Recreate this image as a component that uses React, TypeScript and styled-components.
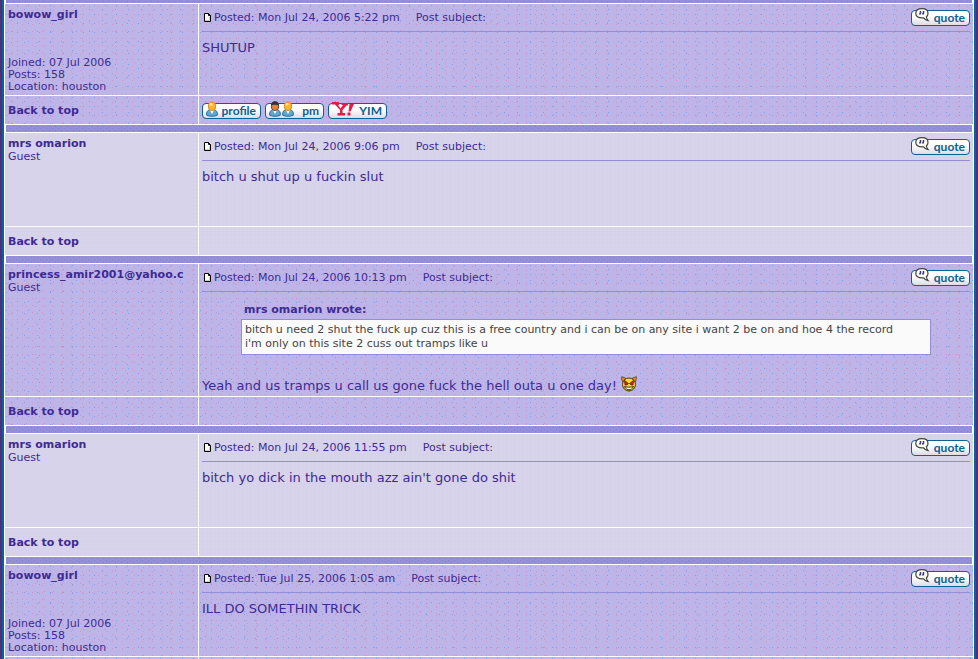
import React from "react";
import styled, { createGlobalStyle } from "styled-components";

const GlobalStyle = createGlobalStyle`
  html { scrollbar-width: none; }
  body {
    margin: 0;
    background: #bdb5e7;
    color: #3f2a94;
    font-family: "DejaVu Sans", Verdana, sans-serif;
    font-size: 11px;
  }
`;

const dot = (color: string, place: string) =>
  `radial-gradient(circle at 0 0, ${color} 0 1px, transparent 1px) ${place}`;

const speckle = [
  dot("#7f9ff0", "1px 1px / 11px 9px"),
  dot("#7f9ff0", "6px 5px / 13px 11px"),
  dot("#cb97cb", "3px 2px / 9px 8px"),
  dot("#cb97cb", "7px 6px / 10px 7px"),
].join(", ");
const paleSpeckle = [
  dot("#cdd3dc", "0 0 / 4px 4px"),
  dot("#dccfe4", "2px 2px / 8px 6px"),
].join(", ");
const barSpeckle = [
  dot("#7f86cc", "1px 1px / 6px 4px"),
  dot("#7f86cc", "4px 3px / 6px 4px"),
].join(", ");

const Page = styled.main`
  display: flex;
  min-height: 100vh;
  overflow: hidden;
  box-sizing: border-box;
  border: solid #552b7c;
  border-width: 0 2px;
`;

const Frame = styled.div`
  flex: 1;
  min-width: 0;
  border: solid #006699;
  border-width: 0 2px;
`;

const Topic = styled.table`
  width: 100%;
  margin-top: -5px;
  table-layout: fixed;
  border-spacing: 1px;
  background: #fff;
`;

const AuthorCol = styled.col`
  width: 193px;
`;

const Cell = styled.td<{ $pale: boolean }>`
  padding: 3px 3px 2px;
  vertical-align: top;
  background: ${(p) => (p.$pale ? `${paleSpeckle}, #d6d3eb` : `${speckle}, #bdb5e7`)};
`;

const PostCell = styled(Cell)<{ $guest: boolean }>`
  height: ${(p) => (p.$guest ? "88px" : "86px")};
`;

const FootCell = styled(Cell)`
  height: 23px;
  vertical-align: middle;
`;

const Spacer = styled.td`
  height: 7px;
  padding: 0;
  border: solid #fff;
  border-width: 0 1px;
  background: ${barSpeckle}, #958fdb;
`;

const Name = styled.strong`
  display: block;
  line-height: 15px;
  white-space: nowrap;
`;

const Detail = styled.div`
  line-height: 12px;
`;

const MemberDetails = styled.div`
  margin-top: 35px;
`;

const TopLink = styled.a`
  color: inherit;
  font-weight: bold;
  text-decoration: none;
`;

const PostHeader = styled.header`
  display: flex;
  align-items: center;
  height: 21px;
  padding-bottom: 3px;
  border-bottom: 1px solid #938ddb;
`;

const Posted = styled.span`
  margin: 0 16px 0 2px;
`;

const Subject = styled.span`
  flex: 1;
`;

const Message = styled.p`
  margin: 8px 0 0;
  font-size: 13px;
  line-height: 16px;
`;

const Quote = styled.blockquote`
  margin: 10px 39px 21px;
`;

const QuoteAuthor = styled.strong`
  display: block;
  padding: 0 3px;
  line-height: 16px;
`;

const QuoteText = styled.p`
  margin: 1px 0 0;
  padding: 3px;
  border: 1px solid #938ddb;
  background: #fafafa;
  color: #444;
  font-size: 11px;
  line-height: 14px;
  white-space: pre-line;
`;

const Buttons = styled.div`
  display: flex;
  gap: 4px;
  padding-top: 1px;
`;

const Badge = styled.a`
  display: flex;
  align-items: center;
  justify-content: space-between;
  box-sizing: border-box;
  width: 59px;
  height: 16px;
  padding: 0 4px 0 3px;
  border: 1px solid #0b6190;
  border-radius: 4px;
  background: linear-gradient(#fff 40%, #dcdce4);
  color: #0b6190;
  font: bold 12px/14px Lato, sans-serif;
  text-decoration: none;
`;

const BadgeIcon = styled.svg`
  flex: none;
  margin-top: -5px;
`;

function PageIcon() {
  return (
    <svg width="10" height="12" viewBox="0 0 10 12" aria-hidden="true">
      <path d="M2.500 1.500h4l2 2v6h-6z" fill="#fff" stroke="#000" />
      <path d="M6.500 1.500v2h2" fill="none" stroke="#000" />
      <path d="M3 8.500h5M7.500 5v4" stroke="#d0d0d0" />
    </svg>
  );
}

function Person({ x = 0, dark = false }: { x?: number; dark?: boolean }) {
  return (
    <g transform={`translate(${x} 0)`}>
      <path d="M.7 14.2c-.5-3 1-5 3.1-5.800h4.400c2.100.8 3.600 2.800 3.100 5.800-2.600 1.400-8 1.400-10.600 0z" fill="#5fa9cf" stroke="#286d99" />
      <path d="M4 9.200 6 13l2-3.800z" fill="#fff" />
      <ellipse cx="6" cy="5.200" rx="3.600" ry="4.200" fill={dark ? "#dc8444" : "#ffb52e"} stroke={dark ? "#704330" : "#d98a20"} />
      {dark ? (
        <path d="M2 4.500c-.3-5.800 8.300-5.800 8 0C8 3.400 4 3.400 2 4.500z" fill="#333" />
      ) : (
        <ellipse cx="5" cy="3.400" rx="1.700" ry="1.300" fill="#ffe17b" />
      )}
    </g>
  );
}

function QuoteBadge() {
  return (
    <Badge href="#quote">
      <BadgeIcon width="15" height="14" viewBox="0 0 15 14" aria-hidden="true">
        <path d="M7 .7c3.700 0 6 1.900 6 4.700 0 1.400-.6 2.500-1.600 3.300.1 1.500.6 2.700 1.700 3.900-2-.2-3.500-1.100-4.400-2.700H7C3.300 9.900.8 8.200.8 5.400S3.300.7 7 .7z" fill="#fffef2" stroke="#444" strokeWidth="1.200" />
        <path d="M5.500 3v2l-1 1.500M8.500 3v2l-1 1.500" fill="none" stroke="#343480" strokeWidth="1.500" />
      </BadgeIcon>
      quote
    </Badge>
  );
}

function MemberButtons() {
  return (
    <Buttons>
      <Badge href="#profile">
        <BadgeIcon width="12" height="16" viewBox="0 0 12 16" aria-hidden="true"><Person /></BadgeIcon>
        profile
      </Badge>
      <Badge href="#pm">
        <BadgeIcon width="25" height="16" viewBox="0 0 25 16" aria-hidden="true"><Person dark /><Person x={13} /></BadgeIcon>
        pm
      </Badge>
      <Badge href="#yim">
        <BadgeIcon width="22" height="16" viewBox="0 0 22 16" aria-hidden="true">
          <path d="M0 1h7v3H6l2.500 3.500L11 4H9.500V2H16v2.500h-1.500L10.500 9v3H13v2.500H5.500V12H8V9L3 3.500H0z" fill="#e61b46" />
          <path d="M17.500 3H22l-3.500 7.500h-2zM15.500 11.500h3v3h-3z" fill="#e61b46" />
        </BadgeIcon>
        YIM
      </Badge>
    </Buttons>
  );
}

const Smiley = styled.svg`
  vertical-align: -2px;
`;

function EvilSmiley() {
  return (
    <Smiley width="16" height="16" viewBox="0 0 16 16" role="img" aria-label="Twisted Evil">
      <circle cx="8" cy="8.500" r="6.500" fill="#ffdc1c" stroke="#40351f" />
      <path d="M.7.7 4.700 2.200 1.800 6C.8 4.500.5 2.500.7.7zM15.300.7l-4 1.500L14.200 6c1-1.500 1.300-3.500 1.100-5.300z" fill="#ec8a2b" stroke="#5c3a22" strokeWidth=".8" />
      <path d="m3.500 4.500 4 3L6 9H4zM12.500 4.500l-4 3L10 9h2z" fill="#e3200f" stroke="#46140a" strokeWidth=".7" />
      <path d="M3.500 10.500c3 .9 6 .9 9 0-.8 2-2.500 3.200-4.500 3.200s-3.700-1.200-4.500-3.200z" fill="#fff" stroke="#201b18" strokeWidth=".9" />
    </Smiley>
  );
}

type Post = {
  author: string;
  posted: string;
  text: string;
  member?: boolean;
  quote?: { author: string; text: string };
};

const posts: Post[] = [
  { author: "bowow_girl", posted: "Mon Jul 24, 2006 5:22 pm", text: "SHUTUP", member: true },
  { author: "mrs omarion", posted: "Mon Jul 24, 2006 9:06 pm", text: "bitch u shut up u fuckin slut" },
  {
    author: "princess_amir2001@yahoo.c",
    posted: "Mon Jul 24, 2006 10:13 pm",
    text: "Yeah and us tramps u call us gone fuck the hell outa u one day!",
    quote: {
      author: "mrs omarion",
      text: "bitch u need 2 shut the fuck up cuz this is a free country and i can be on any site i want 2 be on and hoe 4 the record\ni'm only on this site 2 cuss out tramps like u",
    },
  },
  { author: "mrs omarion", posted: "Mon Jul 24, 2006 11:55 pm", text: "bitch yo dick in the mouth azz ain't gone do shit" },
  { author: "bowow_girl", posted: "Tue Jul 25, 2006 1:05 am", text: "ILL DO SOMETHIN TRICK", member: true },
];

function PostRows({ post, pale, last }: { post: Post; pale: boolean; last: boolean }) {
  return (
    <>
      <tr>
        <PostCell $pale={pale} $guest={!post.member}>
          <Name>{post.author}</Name>
          {post.member ? (
            <MemberDetails>
              <Detail>Joined: 07 Jul 2006</Detail>
              <Detail>Posts: 158</Detail>
              <Detail>Location: houston</Detail>
            </MemberDetails>
          ) : (
            <Detail>Guest</Detail>
          )}
        </PostCell>
        <PostCell $pale={pale} $guest={!post.member}>
          <PostHeader>
            <PageIcon />
            <Posted>Posted: {post.posted}</Posted>
            <Subject>Post subject:</Subject>
            <QuoteBadge />
          </PostHeader>
          {post.quote && (
            <Quote>
              <QuoteAuthor>{post.quote.author} wrote:</QuoteAuthor>
              <QuoteText>{post.quote.text}</QuoteText>
            </Quote>
          )}
          <Message>
            {post.text} {post.quote && <EvilSmiley />}
          </Message>
        </PostCell>
      </tr>
      <tr>
        <FootCell $pale={pale}>{!last && <TopLink href="#top">Back to top</TopLink>}</FootCell>
        <FootCell $pale={pale}>{post.member && !last && <MemberButtons />}</FootCell>
      </tr>
      {!last && (
        <tr>
          <Spacer colSpan={2} />
        </tr>
      )}
    </>
  );
}

export default function App() {
  return (
    <Page id="top">
      <GlobalStyle />
      <Frame>
        <Topic>
          <colgroup>
            <AuthorCol />
            <col />
          </colgroup>
          <tbody>
            <tr>
              <Spacer colSpan={2} />
            </tr>
            {posts.map((post, i) => (
              <PostRows key={post.posted} post={post} pale={i % 2 === 1} last={i === posts.length - 1} />
            ))}
          </tbody>
        </Topic>
      </Frame>
    </Page>
  );
}
